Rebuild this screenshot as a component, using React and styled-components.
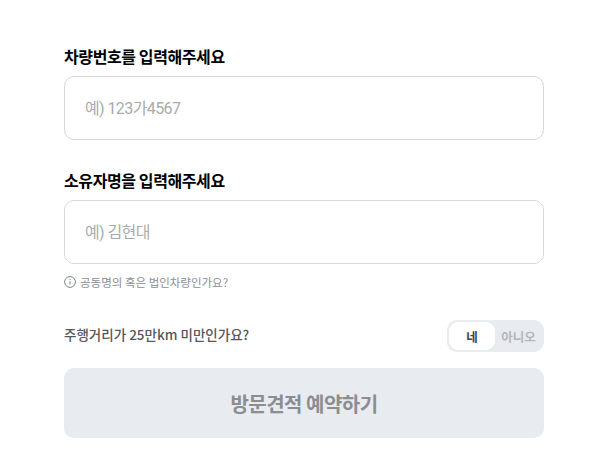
import React from "react";
import styled, { createGlobalStyle } from "styled-components";

const Global = createGlobalStyle`
  html, body { margin: 0; padding: 0; background: #fff; }
  body { font-family: "Noto Sans CJK KR", "Noto Sans", sans-serif; }
  * { box-sizing: border-box; }
`;

const Page = styled.main`
  width: 602px;
  height: 468px;
  padding: 46px 58px 0 64px;
  display: flex;
  flex-direction: column;
`;

const Label = styled.label`
  display: block;
  height: 22px;
  font-size: 16px;
  line-height: 21px;
  font-weight: 700;
  color: #000;
  letter-spacing: -0.4px;
  margin-bottom: 8px;
`;

const Field = styled.input`
  display: block;
  width: 480px;
  height: 64px;
  border: 1px solid #d5d7da;
  border-radius: 10px;
  padding: 0 20px;
  font-family: Roboto, "Noto Sans CJK KR", sans-serif;
  font-size: 16px;
  letter-spacing: -0.6px;
  color: #222;
  outline: none;
  background: #fff;
  margin-bottom: ${(p) => p.$gap}px;
  &::placeholder { color: #a9abae; opacity: 1; }
`;

const Hint = styled.p`
  margin: 0;
  display: flex;
  align-items: center;
  gap: 4px;
  height: 20px;
  font-size: 11.5px;
  line-height: 20px;
  color: #8a8f94;
`;

const Row = styled.div`
  display: flex;
  justify-content: space-between;
  align-items: center;
  height: 32px;
  margin-top: 28px;
`;

const Question = styled.span`
  font-size: 13.5px;
  line-height: 20px;
  font-weight: 500;
  color: #55585c;
  margin-bottom: 4px;
`;

const Toggle = styled.div`
  display: flex;
  width: 97px;
  height: 32px;
  padding: 2px;
  border-radius: 10px;
  background: #e8ebef;
`;

const Option = styled.button`
  border: 0;
  padding: 0;
  font-family: inherit;
  font-size: 12.5px;
  font-weight: 700;
  width: ${(p) => (p.$active ? 46 : 47)}px;
  border-radius: 9px;
  color: ${(p) => (p.$active ? "#3c4650" : "#b4b6ba")};
  background: ${(p) => (p.$active ? "#fff" : "transparent")};
`;

const Submit = styled.button`
  width: 480px;
  height: 70px;
  margin-top: 16px;
  border: 0;
  border-radius: 10px;
  background: #e8ebef;
  color: #8b8d90;
  font-family: inherit;
  font-size: 20px;
  letter-spacing: -0.5px;
  font-weight: 700;
`;

const InfoIcon = () => (
  <svg width="12" height="12" viewBox="0 0 12 12" fill="none" stroke="#7f8489">
    <circle cx="6" cy="6" r="5.4" />
    <path d="M6 5.2v3.4M6 3v1.1" />
  </svg>
);

export default function App() {
  return (
    <Page>
      <Global />
      <Label>차량번호를 입력해주세요</Label>
      <Field placeholder="예) 123가4567" $gap={30} />
      <Label>소유자명을 입력해주세요</Label>
      <Field placeholder="예) 김현대" $gap={8} />
      <Hint>
        <InfoIcon />
        공동명의 혹은 법인차량인가요?
      </Hint>
      <Row>
        <Question>주행거리가 25만km 미만인가요?</Question>
        <Toggle>
          <Option $active>네</Option>
          <Option>아니오</Option>
        </Toggle>
      </Row>
      <Submit>방문견적 예약하기</Submit>
    </Page>
  );
}
